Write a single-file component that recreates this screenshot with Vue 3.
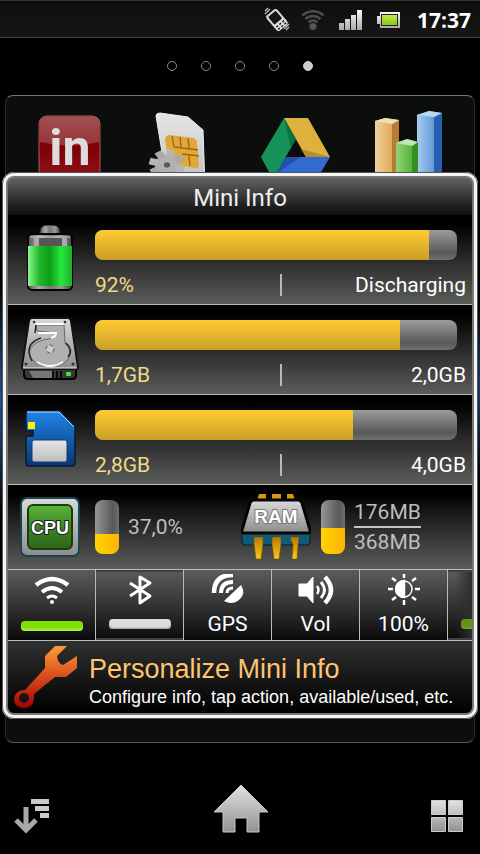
<template>
  <div class="screen">
    <header class="status">
      <svg width="28" height="26" viewBox="0 0 28 26" fill="none">
        <g transform="rotate(-40 14 13)">
          <rect x="7" y="3" width="14" height="20" rx="3" fill="#dcdcdc" />
          <rect x="9" y="5" width="10" height="10" rx="1" fill="#151515" />
          <path d="M9 18h2M13 18h2M17 18h2M9 21h2M13 21h2M17 21h2" stroke="#151515" stroke-width="1.500" />
        </g>
        <path d="M2 7l5-5M2 4l3-3M3 10l2-2M21 22l5-5M23 23l3-3M22 19l2-2" stroke="#bbb" stroke-width="1.300" />
      </svg>
      <svg class="status__wifi" width="24" height="24" viewBox="0 0 24 24" fill="none" stroke="#4d4d4d" stroke-width="2.500">
        <path d="M1.500 7.500a15 15 0 0 1 21 0M4.500 11a11 11 0 0 1 15 0M7.500 14.500a6 6 0 0 1 9 0" />
        <circle cx="12" cy="18.500" r="3.500" fill="#555" stroke="none" />
      </svg>
      <svg class="status__signal" width="24" height="20" viewBox="0 0 24 20" fill="url(#chrome)">
        <path d="M0 13h5v7H0zM6 9h5v11H6zM12 5h5v15h-5zM18 0h5v20h-5z" />
      </svg>
      <svg class="status__battery" width="24" height="18" viewBox="0 0 24 18">
        <path d="M3 1h20v16H3v-4H0V5h3z" fill="url(#chrome)" />
        <rect x="4" y="3" width="17" height="12" fill="#222" />
        <rect x="5" y="4" width="15" height="10" fill="url(#lime)" />
      </svg>
      <time class="status__time">17:37</time>
    </header>

    <nav class="pager">
      <button v-for="n in 5" :key="n" class="pager__dot" :class="{ 'pager__dot--on': n === 5 }" :aria-label="`Screen ${n}`"></button>
    </nav>

    <main class="home">
      <section class="folder">
        <svg viewBox="0 0 80 80" class="folder__icon">
          <rect x="6" y="8" width="61" height="62" rx="8" fill="url(#red)" stroke="#b05a5c" />
          <path d="M7 15q0-6 7-6h46q6 0 6 6v19q-29 7-59 0z" fill="#fff" opacity=".2" />
          <text x="37" y="57" class="folder__in">in</text>
        </svg>
        <svg viewBox="-3 0 80 80" class="folder__icon">
          <path d="M6 8q0-3 4-3l28 4 15 13 2 58H18z" fill="url(#paper)" stroke="#eee" />
          <path d="M15 32q0-5 5-5l23 3q4 1 4 5l2 21q0 5-5 4l-21-4q-4-1-5-6z" fill="#dea83b" />
          <path d="M22 28l2 11 24 3M30 29l1 10M38 30l1 10M32 46l17 2M39 48l1 10" fill="none" stroke="#a6610c" stroke-width="1.300" />
          <g transform="translate(17 57) scale(1 .85)">
            <circle r="12" fill="#afb0b1" />
            <path d="M-4-18h8v8h-8zM-4 10h8v8h-8zM-18-4h8v8h-8zM10-4h8v8h-8z" fill="#b5b6b7" transform="rotate(15)" />
            <path d="M-4-18h8v8h-8zM-4 10h8v8h-8zM-18-4h8v8h-8zM10-4h8v8h-8z" fill="#a9aaab" transform="rotate(60)" />
            <circle r="4" fill="#5b5c5d" stroke="#ccc" />
          </g>
        </svg>
        <svg viewBox="0 0 80 80" class="folder__icon">
          <path d="M1 49L24 10l12 21L16 66h-6z" fill="#159257" />
          <path d="M24 10h24l22 39H46z" fill="#dcb13c" />
          <path d="M26 49h44L60 66H16z" fill="#316bd2" />
          <path d="M24 10l12 21-5 9z" fill="#09733f" />
          <path d="M46 49l-5-8 29 8z" fill="#b38e2b" />
          <path d="M26 49h15L17 65z" fill="#2451ab" />
        </svg>
        <svg viewBox="0 0 80 80" class="folder__icon">
          <path d="M1 13l10-3 14 2v60H1z" fill="url(#sand)" />
          <path d="M18 16l7-3v55h-7z" fill="#b77b36" />
          <path d="M1 13l10-3 14 2-7 4z" fill="#eee0b6" />
          <path d="M43 7l12-4 13 2v70H43z" fill="url(#sky)" />
          <path d="M60 9l8-4v66h-8z" fill="#285fae" />
          <path d="M43 7l12-4 13 2-8 4z" fill="#b9d6ee" />
          <path d="M22 35l11-4 11 3v40H22z" fill="url(#leaf)" />
          <path d="M38 38l6-4v36h-6z" fill="#378d22" />
          <path d="M22 35l11-4 11 3-6 4z" fill="#c1e3b5" />
        </svg>
      </section>

      <article class="widget">
        <h1 class="widget__title">Mini Info</h1>

        <section v-for="row in rows" :key="row.id" class="row">
          <svg v-if="row.id === 'battery'" class="row__icon" viewBox="0 0 70 70">
            <path d="M26 10V7q0-7 8-7h4q8 0 8 7v3z" fill="url(#steel)" stroke="#222" />
            <rect x="14" y="9" width="44" height="56" rx="4" fill="url(#steel)" stroke="#050505" stroke-width="2" />
            <path d="M16 12h40" stroke="#ccc" />
            <path d="M20 13h5v8h-5zM48 13h5v8h-5z" fill="#aaa" />
            <path d="M25 13h23v8H25z" fill="#555" />
            <path d="M14 21h44v40H14z" fill="url(#cell)" />
          </svg>
          <svg v-else-if="row.id === 'phone'" class="row__icon" viewBox="0 0 70 70">
            <path d="M10 52h52v8q0 4-4 4H14q-4 0-4-4z" fill="#383838" stroke="#000" stroke-width="2" />
            <path d="M18 3h36q2 0 3 3l7 46q0 2-2 2H10q-3 0-2-3l7-45q1-3 3-3z" fill="url(#metal)" stroke="#111" stroke-width="2" />
            <path d="M9 53h54" stroke="#eee" />
            <path d="M22 10h28l1 18q5 5 5 11-2 12-20 12T15 38q2-13 25-15l2-5-19-2z" fill="#b0b0b0" stroke="#666" />
            <path d="M22 9h28M24 18h18q0 4-5 5M23 47q13 8 26 0" fill="none" stroke="#fff" stroke-width="2" />
            <path d="M18 46q-9-17 9-23M52 28q8 7 2 14M22 10l-1 8" fill="none" stroke="#222" stroke-width="1.500" />
            <circle cx="36" cy="34" r="4" fill="#ccc" stroke="#555" stroke-dasharray="4 2" />
            <g fill="#333"><circle cx="20" cy="7" r="1.300" /><circle cx="51" cy="7" r="1.300" /><circle cx="12" cy="49" r="1.500" /><circle cx="59" cy="49" r="1.500" /></g>
            <path d="M15 56h24v7H19z" fill="#777" /><path d="M39 56v7M43 56v7M47 56v7" stroke="#0a0a0a" stroke-width="2" />
            <rect x="52" y="57" width="5" height="4" rx="1" fill="#43e43f" />
          </svg>
          <svg v-else class="row__icon" viewBox="0 0 70 70">
            <path d="M14 6h32l15 15v37q0 3-3 3H15q-3 0-3-3V31h7v-5h-7V9q0-3 2-3z" fill="url(#blue)" stroke="#081a35" stroke-width="1.500" />
            <path d="M13 7h32l15 15" fill="none" stroke="#b8dafa" />
            <rect x="14" y="17" width="7" height="7" fill="#fff200" />
            <rect x="18" y="35" width="35" height="22" rx="2" fill="url(#paper)" stroke="#0a3a7d" />
          </svg>
          <div class="row__body">
            <div class="meter" role="meter" :aria-valuenow="row.fill" aria-valuemin="0" aria-valuemax="100">
              <div class="meter__fill" :style="{ width: row.fill + '%' }"></div>
            </div>
            <div class="row__labels">
              <span class="row__used">{{ row.used }}</span>
              <span class="row__sep"></span>
              <span class="row__total">{{ row.total }}</span>
            </div>
          </div>
        </section>

        <section class="chips">
          <div class="chips__item">
            <svg class="chips__icon" width="60" height="62" viewBox="0 0 60 62">
              <rect x="1" y="2" width="58" height="58" rx="6" fill="url(#metal)" stroke="#164450" stroke-width="2" />
              <rect x="7" y="8" width="46" height="46" rx="6" fill="#163e0c" />
              <rect x="9" y="10" width="42" height="42" rx="4" fill="url(#pcb)" />
              <text x="30" y="38" class="chips__label">CPU</text>
            </svg>
            <div class="pill" role="meter" aria-valuenow="37" aria-valuemin="0" aria-valuemax="100"><div class="pill__fill" :style="{ height: '37%' }"></div></div>
            <span>37,0%</span>
          </div>
          <div class="chips__item">
            <svg class="chips__icon chips__icon--ram" width="70" height="68" viewBox="0 0 70 68">
              <path d="M18 1h7v7h-9zM31 1h9v7h-9zM46 1h6l2 7h-8z" fill="#d69b05" />
              <path d="M1 38h68v11q0 3-3 3H4q-3 0-3-3z" fill="#125b78" stroke="#031e29" />
              <path d="M13 7h44q3 0 4 3l8 27q1 3-3 3H4q-4 0-3-3l8-27q1-3 4-3z" fill="url(#metal)" stroke="#050505" stroke-width="3" />
              <path d="M13 44h9v7l-2 15h-5l-2-15zM31 44h9v7l-2 15h-5l-2-15zM49 44h9l-1 8-1 14h-5l1-14z" fill="url(#gold)" stroke="#6c4300" stroke-width=".5" />
              <text x="35" y="30" class="chips__label chips__label--ram">RAM</text>
            </svg>
            <div class="pill" role="meter" aria-valuenow="48" aria-valuemin="0" aria-valuemax="100"><div class="pill__fill" :style="{ height: '48%' }"></div></div>
            <div class="ratio"><span>176MB</span><span>368MB</span></div>
          </div>
        </section>

        <section class="toggles">
          <button class="toggle" aria-label="Wi-Fi">
            <svg width="36" height="32" viewBox="0 0 36 32" fill="none" stroke="#fff">
              <path d="M2 11q16-12 32 0" stroke-width="4.500" /><path d="M8 18q10-8 20 0" stroke-width="4" /><path d="M13 24q5-4 10 0" stroke-width="3" />
              <circle cx="18" cy="28" r="2" fill="#fff" stroke="none" />
            </svg>
            <span class="toggle__led toggle__led--on"></span>
          </button>
          <button class="toggle toggle--sunk" aria-label="Bluetooth">
            <svg width="36" height="32" viewBox="0 0 36 32" fill="none" stroke="#fff" stroke-width="3"><path d="M8 9l20 13-10 7V3l10 6L8 22" stroke-linejoin="round" /></svg>
            <span class="toggle__led"></span>
          </button>
          <button class="toggle">
            <svg width="36" height="32" viewBox="0 0 36 32" fill="none" stroke="#fff">
              <path d="M4 19Q4 1 23 1" stroke-width="4.500" /><path d="M11 19Q11 8 23 8" stroke-width="4" /><path d="M17 19q0-5 6-5" stroke-width="3" />
              <path d="M14 27L31 11q5 8-1 14-7 7-16 2z" fill="#fff" stroke="none" />
            </svg>
            <span>GPS</span>
          </button>
          <button class="toggle">
            <svg width="36" height="32" viewBox="0 0 36 32" fill="none" stroke="#fff">
              <path d="M1 10h8l6-7v26l-6-7H1z" fill="#fff" stroke-linejoin="round" />
              <path d="M19 12q3 4 0 8" stroke-width="2.500" /><path d="M23 8q7 8 0 16" stroke-width="3" /><path d="M27 3q12 13 0 26" stroke-width="4.500" />
            </svg>
            <span>Vol</span>
          </button>
          <button class="toggle">
            <svg width="36" height="32" viewBox="0 0 36 32" fill="none" stroke="#fff" stroke-width="2.500">
              <circle cx="18" cy="15" r="8" stroke-width="1.500" /><path d="M18 7a8 8 0 0 0 0 16z" fill="#fff" />
              <path d="M18 0v4M18 26v5M2 15h5M29 15h5M6 4l4 3M26 23l4 3M30 4l-4 3M10 23l-4 3" />
            </svg>
            <span>100%</span>
          </button>
          <button class="toggle toggle--sunk toggle--next" aria-label="Next">
            <span class="toggle__led toggle__led--on"></span>
          </button>
        </section>

        <button class="promo">
          <svg width="64" height="64" viewBox="0 0 64 64">
            <path d="M41 1h12l-10 10q1 8 6 9l14-9v12L52 32H41L20 49q1 14-11 14-9-1-9-9 1-9 11-9L31 23V11z" fill="url(#flame)" />
            <circle cx="10" cy="53" r="5" fill="#161616" />
          </svg>
          <span class="promo__text">
            <strong>Personalize Mini Info</strong>
            <span>Configure info, tap action, available/used, etc.</span>
          </span>
        </button>
      </article>
    </main>

    <footer class="dock">
      <button aria-label="Sort">
        <svg width="36" height="36" viewBox="0 0 36 36">
          <path d="M17 1h18v5H17zM21 8h14v5H21zM26 15h9v5h-9z" fill="#c9c9c9" />
          <path d="M12 9v22M2 22l10 10 10-10" fill="none" stroke="#a9a9a9" stroke-width="5" />
        </svg>
      </button>
      <button aria-label="Home">
        <svg width="56" height="50" viewBox="0 0 56 50"><path d="M28 1l27 27h-9v20H34V34H22v14H10V28H1z" fill="url(#silver)" stroke="#c4c4c4" /></svg>
      </button>
      <button aria-label="Apps">
        <svg width="32" height="34" viewBox="0 0 32 34" fill="url(#silver)" stroke="#ccc"><path d="M.500.500h14v14H.500zM17.500.500h14v14h-14zM.500 17.500h14v14H.500zM17.500 17.500h14v14h-14z" /></svg>
      </button>
    </footer>

    <!-- shared gradients -->
    <svg class="defs" width="0" height="0" aria-hidden="true">
      <defs>
        <linearGradient v-for="g in gradients" :id="g.id" :key="g.id" x1="0" y1="0" :x2="g.flat ? 1 : 0" :y2="g.flat ? 0 : 1">
          <stop v-for="(c, i) in g.colors" :key="i" :offset="i / (g.colors.length - 1)" :stop-color="c" />
        </linearGradient>
      </defs>
    </svg>
  </div>
</template>

<script setup>
const rows = [
  { id: 'battery', fill: 92.3, used: '92%', total: 'Discharging' },
  { id: 'phone', fill: 84.3, used: '1,7GB', total: '2,0GB' },
  { id: 'card', fill: 71.3, used: '2,8GB', total: '4,0GB' },
]

const gradients = [
  { id: 'chrome', colors: ['#fafafa', '#a8a8a8'] },
  { id: 'silver', colors: ['#e2e2e2', '#929292'] },
  { id: 'paper', colors: ['#e6e6e6', '#bdbdbd'] },
  { id: 'metal', colors: ['#dadada', '#8c8c8c'] },
  { id: 'red', colors: ['#8c2429', '#7c0005', '#8f151b'] },
  { id: 'blue', colors: ['#1f86e8', '#0b3470'] },
  { id: 'pcb', colors: ['#5bb337', '#3d8525', '#2c681b'] },
  { id: 'flame', colors: ['#ff9c35', '#d84b1c', '#a40000'] },
  { id: 'gold', colors: ['#b87900', '#ffc91b'] },
  { id: 'lime', colors: ['#c4ec4c', '#84c80b'] },
  { id: 'steel', flat: true, colors: ['#555', '#aaa', '#777', '#999', '#444'] },
  { id: 'cell', flat: true, colors: ['#8df891', '#24b82c', '#0c9d17', '#27e83a', '#1db02a'] },
  { id: 'sand', flat: true, colors: ['#efd199', '#d99a43'] },
  { id: 'sky', flat: true, colors: ['#a8cdf0', '#427fce'] },
  { id: 'leaf', flat: true, colors: ['#93d47b', '#3fa51f'] },
]
</script>

<style>
body { background: #000; }
</style>

<style scoped>
.screen { display: flex; flex-direction: column; min-height: 100vh; color: #fff; font-family: Roboto, sans-serif; background: radial-gradient(ellipse 6px 120px at 0 400px, #245799, transparent), radial-gradient(ellipse 5px 90px at 100% 390px, #1c4277, transparent), #000; }
button { margin: 0; padding: 0; border: 0; background: none; color: inherit; font: inherit; cursor: pointer; }
svg { display: block; flex: none; }
.defs { position: absolute; }

.status { display: flex; align-items: center; justify-content: flex-end; box-sizing: border-box; height: 38px; padding: 1px 9px 0 0; border-top: 1px solid #333; border-bottom: 1px solid #444; background: linear-gradient(#0e0e0e, #161616); }
.status__wifi { margin-left: 10px; }
.status__signal { margin-left: 14px; }
.status__battery { margin-left: 14px; }
.status__time { margin-left: 16px; font: 700 21px/24px "Open Sans", sans-serif; }

.pager { display: flex; align-items: center; justify-content: center; gap: 24px; box-sizing: border-box; height: 57px; padding-bottom: 2px; }
.pager__dot { box-sizing: border-box; width: 10px; height: 10px; border: 1px solid #8a8a8a; border-radius: 50%; }
.pager__dot--on { border-color: #ccc; background: #ccc; }

.home { display: grid; }
.folder { grid-area: 1 / 1; display: grid; grid-template-columns: repeat(4, 80px); justify-content: space-between; align-content: start; margin: 0 5px; padding: 12px 20px 0 27px; border: 1px solid #2a2a2a; border-top-color: #777; border-bottom-color: #555; border-radius: 8px; background: #0c0d0d; }
.folder__icon { width: 80px; height: 80px; }
.folder__in { font: 700 50px Roboto, sans-serif; fill: #dcdcdc; text-anchor: middle; }

.widget { grid-area: 1 / 1; z-index: 1; overflow: hidden; margin: 77px 2px 24px; border: 4px solid #f4f4f4; border-radius: 12px; outline: 1px solid #555; outline-offset: -1px; padding: 2px; background: #777; }
.widget__title { box-sizing: border-box; height: 37px; margin: 0; border-radius: 6px 6px 0 0; font-size: 24px; font-weight: 400; line-height: 40px; text-align: center; color: #eee; background: linear-gradient(#616361, #1f201f 75%, #0c0f0c); }

.row { display: grid; grid-template-columns: 87px 1fr; padding-right: 6px; border-bottom: 1px solid #b9bbb9; background: linear-gradient(#000 10%, #5b5d5b); }
.row__icon { width: 70px; height: 70px; margin: 10px 0 0 6px; }
.row__body { padding: 15px 0 4px; }
.meter { overflow: hidden; height: 30px; margin: 0 9px 10px 0; border-radius: 8px; background: linear-gradient(#9c9c9c, #575957 75%, #6f716f); }
.meter__fill { height: 100%; background: linear-gradient(#ffcb32, #c99e27); }
.row__labels { display: grid; grid-template-columns: 1fr 2px 1fr; align-items: center; font-size: 21px; line-height: 30px; }
.row__used { color: #f0db86; }
.row__sep { height: 22px; background: #b9b9b9; }
.row__total { text-align: right; }

.chips { display: grid; grid-template-columns: 221px 1fr; height: 84px; border-bottom: 1px solid #b9bbb9; font-size: 21px; color: #bebebe; background: linear-gradient(#000 10%, #5b5d5b); }
.chips__item { display: flex; align-items: center; padding-left: 12px; }
.chips__icon { margin-right: 15px; }
.chips__icon--ram { margin-right: 10px; }
.chips__label { font: 700 18px "Liberation Sans", sans-serif; fill: #fff; stroke: #1c1c1c; stroke-width: 2px; paint-order: stroke; text-anchor: middle; }
.chips__label--ram { font-size: 19px; stroke: #777; }
.pill { display: flex; flex-direction: column; justify-content: flex-end; overflow: hidden; width: 24px; height: 54px; margin-right: 9px; border-radius: 8px; background: linear-gradient(90deg, #969696, #575957 75%, #6f716f); }
.pill__fill { background: linear-gradient(90deg, #ffd400, #ffb400); }
.ratio { display: grid; line-height: 28px; }
.ratio span + span { border-top: 2px solid #c3c3c3; }

.toggles { display: flex; overflow: hidden; height: 70px; border-bottom: 1px solid #b9bbb9; }
.toggle { display: flex; flex: 0 0 88px; flex-direction: column; align-items: center; box-sizing: border-box; padding-top: 4px; border-right: 1px solid #b9bbb9; font-size: 21px; line-height: 36px; background: linear-gradient(#5b5d5b, #0a0a0a); }
.toggle--sunk { box-shadow: inset 0 2px #3c3f43, inset 0 -2px #3c3f43; }
.toggle__led { width: 62px; height: 10px; margin-top: 15px; border-radius: 4px; background: #dcdcdc; box-shadow: inset 0 -1px 2px #999; }
.toggle--sunk .toggle__led { margin-top: 13px; }
.toggle__led--on { background: #82e000; box-shadow: inset 0 -2px 2px #a8e85c; }
.toggle--next { background: linear-gradient(90deg, transparent 8px, #2c2e2c 24px), linear-gradient(#5b5d5b, #0a0a0a); }
.toggle--next .toggle__led--on { margin-top: 45px; opacity: .6; }

.promo { display: flex; align-items: center; box-sizing: border-box; width: 100%; height: 72px; padding: 0 6px; border-radius: 0 0 6px 6px; text-align: left; font-family: "Liberation Sans", sans-serif; background: linear-gradient(#303030, #000); }
.promo__text { display: grid; margin-left: 11px; padding-top: 8px; font-size: 18px; line-height: 24px; white-space: nowrap; }
.promo__text strong { font-size: 27px; font-weight: 400; line-height: 32px; color: #ffc470; }

.dock { display: flex; flex: 1; align-items: flex-end; justify-content: space-between; padding: 0 17px 20px 14px; }
</style>
